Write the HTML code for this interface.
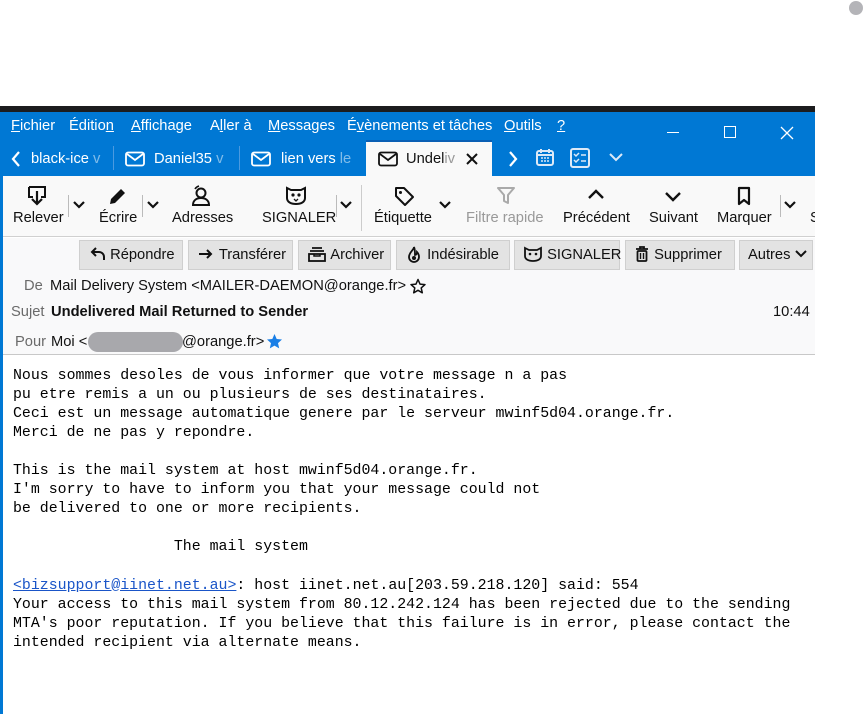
<!DOCTYPE html>
<html><head><meta charset="utf-8"><style>
*{margin:0;padding:0;box-sizing:border-box}
body{width:864px;height:714px;background:#fff;position:relative;overflow:hidden;font-family:"Liberation Sans",sans-serif;font-size:14.7px;color:#111}
.a{position:absolute;white-space:nowrap}
.dark{left:0;top:106px;width:815px;height:7px;background:#1c1c1e}
.blue{left:0;top:112px;width:815px;height:64px;background:#0078d4}
.lb{left:0;top:112px;width:3px;height:602px;background:#0078d4}
.menu{color:#fff;top:118px}
.menu u{text-decoration:underline}
.tab{color:#fff;top:151px}
.tbar{left:3px;top:176px;width:812px;height:61px;background:#f9f9f9;border-bottom:1px solid #d0d0d0}
.tl{top:210px;color:#111}
.hdr{left:3px;top:238px;width:812px;height:117px;background:#f9f9fa;border-bottom:1px solid #c8c8c8}
.btn{top:240px;height:30px;background:#e3e3e3;border:1px solid #cfcfcf;line-height:29px;padding-left:8px;color:#111}
.lab{color:#6a6a6a}
pre{position:absolute;left:13px;top:367px;font-family:"Liberation Mono",monospace;font-size:14.9px;line-height:19.05px;color:#000}
pre a{color:#1a55c8;text-decoration:underline}
</style></head><body>
<div class="a" style="left:849px;top:1px;width:14px;height:14px;border-radius:50%;background:#b4b4b8"></div>
<div class="a dark"></div>
<div class="a blue"></div>
<div class="a lb"></div>
<div class="a menu" style="left:11px"><u>F</u>ichier</div>
<div class="a menu" style="left:69px">Éditio<u>n</u></div>
<div class="a menu" style="left:131px"><u>A</u>ffichage</div>
<div class="a menu" style="left:210px">A<u>l</u>ler à</div>
<div class="a menu" style="left:268px"><u>M</u>essages</div>
<div class="a menu" style="left:347px">É<u>v</u>ènements et tâches</div>
<div class="a menu" style="left:504px"><u>O</u>utils</div>
<div class="a menu" style="left:557px"><u>?</u></div>
<div class="a" style="left:667px;top:132px;width:12px;height:1px;background:#fff"></div>
<div class="a" style="left:724px;top:126px;width:12px;height:12px;border:1.2px solid #fff"></div>
<svg class="a" style="left:780px;top:126px" width="14" height="14"><path d="M1 1l12 12M13 1L1 13" stroke="#fff" stroke-width="1.3"/></svg>
<svg class="a" style="left:10px;top:150px" width="12" height="18"><path d="M9 2L3 9l6 7" stroke="#fff" stroke-width="2.2" fill="none"/></svg>
<div class="a tab" style="left:31px;color:#fff">black-ice <span style="opacity:.5">v</span></div>
<div class="a" style="left:113px;top:146px;width:1px;height:24px;background:#4a9ae0"></div>
<svg class="a" style="left:125px;top:151px" width="20" height="16"><rect x="1" y="1.5" width="18" height="13" rx="2" fill="none" stroke="#fff" stroke-width="1.8"/><path d="M2 3l8 6 8-6" stroke="#fff" stroke-width="1.8" fill="none"/></svg>
<div class="a tab" style="left:154px">Daniel35 <span style="opacity:.5">v</span></div>
<div class="a" style="left:239px;top:146px;width:1px;height:24px;background:#4a9ae0"></div>
<svg class="a" style="left:251px;top:151px" width="20" height="16"><rect x="1" y="1.5" width="18" height="13" rx="2" fill="none" stroke="#fff" stroke-width="1.8"/><path d="M2 3l8 6 8-6" stroke="#fff" stroke-width="1.8" fill="none"/></svg>
<div class="a tab" style="left:281px">lien vers <span style="opacity:.5">le</span></div>
<div class="a" style="left:366px;top:140px;width:126px;height:37px;background:#f9f9f9;border-top:2px solid #0a5fb4"></div>
<svg class="a" style="left:378px;top:151px" width="20" height="16"><rect x="1" y="1.5" width="18" height="13" rx="2" fill="none" stroke="#111" stroke-width="1.8"/><path d="M2 3l8 6 8-6" stroke="#111" stroke-width="1.8" fill="none"/></svg>
<div class="a tab" style="left:406px;color:#111">Undel<span style="color:#999">iv</span></div>
<svg class="a" style="left:465px;top:152px" width="14" height="14"><path d="M2 2l10 10M12 2L2 12" stroke="#111" stroke-width="2"/></svg>
<svg class="a" style="left:507px;top:150px" width="12" height="18"><path d="M3 2l6 7-6 7" stroke="#fff" stroke-width="2.2" fill="none"/></svg>
<svg class="a" style="left:535px;top:147px" width="20" height="20"><rect x="2" y="4" width="16" height="14" rx="2" fill="none" stroke="#dce9f7" stroke-width="2"/><path d="M2 8h16M6 2v4M14 2v4" stroke="#dce9f7" stroke-width="2"/><path d="M6 11h2M9 11h2M12 11h2M6 14h2M9 14h2M12 14h2" stroke="#dce9f7" stroke-width="1.6"/></svg>
<svg class="a" style="left:570px;top:148px" width="20" height="20"><rect x="1" y="1" width="18" height="18" rx="2" fill="none" stroke="#dce9f7" stroke-width="2"/><path d="M4 6l2 2 3-3M4 12l2 2 3-3M11 7h5M11 13h5" stroke="#dce9f7" stroke-width="1.5" fill="none"/></svg>
<svg class="a" style="left:608px;top:152px" width="16" height="10"><path d="M2 2l6 6 6-6" stroke="#dce9f7" stroke-width="2" fill="none"/></svg>
<div class="a tbar"></div>
<svg class="a" style="left:26px;top:185px" width="22" height="22"><path d="M3 2h16v10h-4M7 12H3V2" stroke="#111" stroke-width="2" fill="none"/><path d="M11 6v13M6 14l5 5 5-5" stroke="#111" stroke-width="2.2" fill="none"/></svg>
<div class="a tl" style="left:13px">Relever</div>
<div class="a" style="left:68px;top:195px;width:1px;height:22px;background:#bbb"></div>
<svg class="a" style="left:72px;top:200px" width="14" height="10"><path d="M2 2l5 5 5-5" stroke="#111" stroke-width="2.2" fill="none"/></svg>
<svg class="a" style="left:106px;top:186px" width="22" height="22"><path d="M4 18l1-5L15 3l4 4L9 17z" fill="#111"/></svg>
<div class="a tl" style="left:99px">Écrire</div>
<div class="a" style="left:142px;top:195px;width:1px;height:22px;background:#bbb"></div>
<svg class="a" style="left:146px;top:200px" width="14" height="10"><path d="M2 2l5 5 5-5" stroke="#111" stroke-width="2.2" fill="none"/></svg>
<svg class="a" style="left:190px;top:185px" width="22" height="22"><circle cx="11" cy="8" r="4.5" fill="none" stroke="#111" stroke-width="2"/><path d="M3 20c0-5 4-7 8-7s8 2 8 7z" fill="none" stroke="#111" stroke-width="2"/><path d="M5 4a7 7 0 0 1 4-3" stroke="#111" stroke-width="1.6" fill="none"/></svg>
<div class="a tl" style="left:172px">Adresses</div>
<svg class="a" style="left:285px;top:186px" width="22" height="20"><path d="M2 2l4 2h10l4-2v10c0 4-4 6-9 6s-9-2-9-6z" fill="none" stroke="#111" stroke-width="2"/><circle cx="8" cy="9" r="1.6" fill="#111"/><circle cx="14" cy="9" r="1.6" fill="#111"/><path d="M9 13l2 2 2-2" stroke="#111" stroke-width="1.3" fill="none"/></svg>
<div class="a tl" style="left:262px">SIGNALER</div>
<div class="a" style="left:336px;top:195px;width:1px;height:22px;background:#bbb"></div>
<svg class="a" style="left:339px;top:200px" width="14" height="10"><path d="M2 2l5 5 5-5" stroke="#111" stroke-width="2.2" fill="none"/></svg>
<div class="a" style="left:361px;top:185px;width:1px;height:46px;background:#ccc"></div>
<svg class="a" style="left:393px;top:185px" width="22" height="22"><path d="M3 3h8l9 9-8 8-9-9z" fill="none" stroke="#111" stroke-width="2" stroke-linejoin="round"/><circle cx="7.5" cy="7.5" r="1.5" fill="#111"/></svg>
<div class="a tl" style="left:374px">Étiquette</div>
<svg class="a" style="left:438px;top:200px" width="14" height="10"><path d="M2 2l5 5 5-5" stroke="#111" stroke-width="2.2" fill="none"/></svg>
<svg class="a" style="left:496px;top:185px" width="22" height="22"><path d="M2 3h16l-6 7v8l-4-2v-6z" fill="none" stroke="#aaa" stroke-width="2" stroke-linejoin="round"/></svg>
<div class="a tl" style="left:466px;color:#999">Filtre rapide</div>
<svg class="a" style="left:587px;top:188px" width="18" height="14"><path d="M2 10l7-7 7 7" stroke="#111" stroke-width="2.4" fill="none"/></svg>
<div class="a tl" style="left:563px">Précédent</div>
<svg class="a" style="left:664px;top:190px" width="18" height="14"><path d="M2 3l7 7 7-7" stroke="#111" stroke-width="2.4" fill="none"/></svg>
<div class="a tl" style="left:649px">Suivant</div>
<svg class="a" style="left:736px;top:186px" width="16" height="20"><path d="M3 2h10v16l-5-4-5 4z" fill="none" stroke="#111" stroke-width="2.2" stroke-linejoin="round"/></svg>
<div class="a tl" style="left:717px">Marquer</div>
<div class="a" style="left:780px;top:195px;width:1px;height:22px;background:#bbb"></div>
<svg class="a" style="left:783px;top:200px" width="14" height="10"><path d="M2 2l5 5 5-5" stroke="#111" stroke-width="2.2" fill="none"/></svg>
<div class="a tl" style="left:810px;width:5px;overflow:hidden">S</div>
<div class="a hdr"></div>
<div class="a btn" style="left:79px;width:104px;padding-left:10px"><svg style="vertical-align:-3px" width="16" height="16"><path d="M6 2L2 6l4 4M2 6h7a5 5 0 0 1 5 5v3" stroke="#111" stroke-width="2" fill="none"/></svg> Répondre</div>
<div class="a btn" style="left:188px;width:105px"><svg style="vertical-align:-2px" width="18" height="14"><path d="M2 7h12M10 3l4 4-4 4" stroke="#111" stroke-width="2" fill="none"/></svg> Transférer</div>
<div class="a btn" style="left:298px;width:93px"><svg style="vertical-align:-3px" width="20" height="16"><path d="M5 2h10M3 5h14" stroke="#111" stroke-width="1.8"/><rect x="2" y="8" width="16" height="7" fill="none" stroke="#111" stroke-width="1.8"/><path d="M7 8v2h6V8" stroke="#111" stroke-width="1.5" fill="none"/></svg> Archiver</div>
<div class="a btn" style="left:396px;width:114px"><svg style="vertical-align:-4px" width="18" height="18"><path d="M9 2c0 3-5 5-5 10a5 5 0 0 0 10 0c0-2-1-4-2-5 0 2-1 3-2 3 0-3 0-6-1-8z" fill="none" stroke="#111" stroke-width="1.8"/><circle cx="9" cy="13" r="2" fill="#111"/></svg> Indésirable</div>
<div class="a btn" style="left:514px;width:106px"><svg style="vertical-align:-3px" width="20" height="16"><path d="M2 2l4 2h8l4-2v8c0 3-3 5-8 5s-8-2-8-5z" fill="none" stroke="#111" stroke-width="1.8"/><circle cx="7" cy="8" r="1.3" fill="#111"/><circle cx="13" cy="8" r="1.3" fill="#111"/></svg> SIGNALER</div>
<div class="a btn" style="left:625px;width:110px"><svg style="vertical-align:-4px" width="16" height="18"><path d="M2 4h12M6 4V2h4v2" stroke="#111" stroke-width="1.8" fill="none"/><rect x="3.5" y="6" width="9" height="10" rx="1" fill="none" stroke="#111" stroke-width="1.8"/><path d="M6.5 8v6M9.5 8v6" stroke="#111" stroke-width="1.4"/></svg> Supprimer</div>
<div class="a btn" style="left:739px;width:74px">Autres <svg style="vertical-align:0px" width="12" height="9"><path d="M1 1l5 5 5-5" stroke="#111" stroke-width="2" fill="none"/></svg></div>
<div class="a lab" style="left:24px;top:278px">De</div>
<div class="a" style="left:50px;top:278px">Mail Delivery System &lt;MAILER-DAEMON@orange.fr&gt;</div>
<svg class="a" style="left:410px;top:278px" width="16" height="16"><path d="M8 1.5l2 4.6 5 .5-3.8 3.3 1.1 4.9L8 12.3l-4.3 2.5 1.1-4.9L1 6.6l5-.5z" fill="none" stroke="#111" stroke-width="1.5" stroke-linejoin="round"/></svg>
<div class="a lab" style="left:11px;top:304px">Sujet</div>
<div class="a" style="left:51px;top:304px;font-weight:bold">Undelivered Mail Returned to Sender</div>
<div class="a" style="left:773px;top:304px">10:44</div>
<div class="a lab" style="left:15px;top:334px">Pour</div>
<div class="a" style="left:51px;top:334px">Moi &lt;</div>
<div class="a" style="left:88px;top:332px;width:95px;height:20px;border-radius:10px;background:#a8a8ac"></div>
<div class="a" style="left:182px;top:334px">@orange.fr&gt;</div>
<svg class="a" style="left:266px;top:333px" width="17" height="17"><path d="M8.5 1l2.2 5 5.3.5-4 3.6 1.2 5.3-4.7-2.8-4.7 2.8 1.2-5.3-4-3.6 5.3-.5z" fill="#1a7fe6"/></svg>
<pre>Nous sommes desoles de vous informer que votre message n a pas
pu etre remis a un ou plusieurs de ses destinataires.
Ceci est un message automatique genere par le serveur mwinf5d04.orange.fr.
Merci de ne pas y repondre.

This is the mail system at host mwinf5d04.orange.fr.
I'm sorry to have to inform you that your message could not
be delivered to one or more recipients.

                  The mail system

<a>&lt;bizsupport@iinet.net.au&gt;</a>: host iinet.net.au[203.59.218.120] said: 554
Your access to this mail system from 80.12.242.124 has been rejected due to the sending
MTA's poor reputation. If you believe that this failure is in error, please contact the
intended recipient via alternate means.</pre>
</body></html>
